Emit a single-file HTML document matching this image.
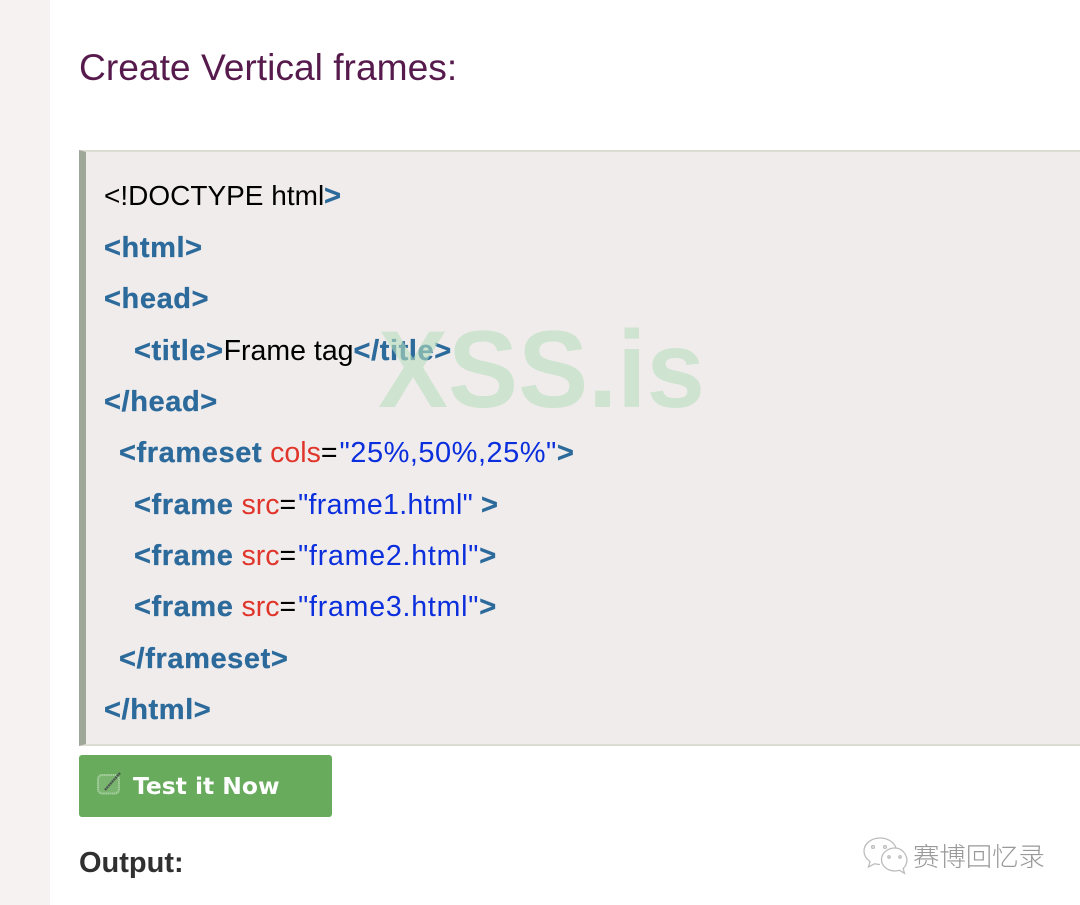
<!DOCTYPE html>
<html>
<head>
<meta charset="utf-8">
<style>
html,body{margin:0;padding:0;background:#fff}
body{width:1080px;height:905px;position:relative;overflow:hidden;font-family:"Liberation Sans",Arial,sans-serif}
.side{position:absolute;left:0;top:0;width:50px;height:905px;background:#f6f2f1}
h2{position:absolute;left:79px;top:45px;margin:0;font-weight:400;font-size:37.2px;line-height:44px;color:#561a4c;white-space:nowrap}
.code{position:absolute;left:79px;top:150px;width:1001px;height:596px;box-sizing:border-box;background:#f1ecec;border-left:7px solid #9fa898;border-top:2px solid #dcdcd2;border-bottom:2px solid #dcdcd2}
.l{position:absolute;white-space:pre;font-size:28.5px;line-height:32px;color:#000}
.t{color:#2b6a9b;font-weight:700;font-size:29px;letter-spacing:.6px;-webkit-text-stroke:.3px #2b6a9b}
.a{color:#e0352b}
.v{color:#0b2fdc}
.v0{letter-spacing:.33px}
.v1{font-size:29px;letter-spacing:.5px}
.v2{letter-spacing:.8px}
.e{letter-spacing:2px}
.wm{position:absolute;left:378px;top:312px;font-size:105px;line-height:120px;font-weight:700;color:#b7dfbe;letter-spacing:0;white-space:nowrap;opacity:.6;transform:scaleY(1.04);transform-origin:0 96.4px}
.btn{position:absolute;left:79px;top:755px;width:253px;height:62px;background:#68ab5c;border-radius:3px}
.btn span{position:absolute;left:54px;top:16px;font-family:"DejaVu Sans",Verdana,sans-serif;font-weight:700;font-size:23.4px;line-height:30px;color:#fff;white-space:nowrap}
.btn svg{position:absolute;left:16px;top:17px}
.out{position:absolute;left:79px;top:847px;font-size:29px;line-height:32px;font-weight:700;color:#303030}
.wx{position:absolute;left:862px;top:836px}
.wt{position:absolute;left:913px;top:839px;font-family:"Liberation Sans","Noto Sans CJK SC",sans-serif;font-weight:300;font-size:26.4px;line-height:36px;color:#999;white-space:nowrap}
</style>
</head>
<body>
<div class="side"></div>
<h2>Create Vertical frames:</h2>
<div class="code"></div>
<div class="l" style="left:104px;top:180px;font-size:28px">&lt;!DOCTYPE html<span class="t">&gt;</span></div>
<div class="l t" style="left:104px;top:232px">&lt;html&gt;</div>
<div class="l t" style="left:104px;top:283px">&lt;head&gt;</div>
<div class="l" style="left:134px;top:335px"><span class="t">&lt;title&gt;</span>Frame tag<span class="t">&lt;/title&gt;</span></div>
<div class="l t" style="left:104px;top:386px">&lt;/head&gt;</div>
<div class="l" style="left:119px;top:437px"><span class="t">&lt;frameset</span> <span class="a">cols</span><span class="e">=</span><span class="v v1">"25%,50%,25%"</span><span class="t">&gt;</span></div>
<div class="l" style="left:134px;top:489px"><span class="t">&lt;frame</span> <span class="a">src</span><span class="e">=</span><span class="v v0">"frame1.html"</span> <span class="t">&gt;</span></div>
<div class="l" style="left:134px;top:540px"><span class="t">&lt;frame</span> <span class="a">src</span><span class="e">=</span><span class="v v2">"frame2.html"</span><span class="t">&gt;</span></div>
<div class="l" style="left:134px;top:591px"><span class="t">&lt;frame</span> <span class="a">src</span><span class="e">=</span><span class="v v2">"frame3.html"</span><span class="t">&gt;</span></div>
<div class="l t" style="left:119px;top:643px">&lt;/frameset&gt;</div>
<div class="l t" style="left:104px;top:694px">&lt;/html&gt;</div>
<div class="wm">XSS.is</div>
<div class="btn">
<svg width="28" height="28" viewBox="0 0 28 28"><rect x="3" y="3" width="21" height="18.500" rx="4" fill="#7ab570" stroke="#a3cd9c" stroke-width="2" stroke-dasharray="1.6 .5"/><path d="M10 18L25 1" stroke="#4c5550" stroke-width="2.4" stroke-dasharray="2 .6"/></svg>
<span>Test it Now</span>
</div>
<div class="out">Output:</div>
<svg class="wx" width="48" height="40" viewBox="0 0 48 40" fill="none" stroke="#bcbcbc" stroke-width="1.3"><path d="M18 2C9.500 2 2 7.500 2 15c0 4.500 2.500 8 6 10.500L6.500 31l6-3.200c1.800.5 3.500.7 5.500.7"/><path d="M18 2c7.500 0 14 4 16 10"/><path d="M33 12c-7.500 0-13.500 5-13.500 11.500S25.500 35 33 35c1.700 0 3-.2 4.500-.7l5 3-1.400-4.800c2.600-2.300 3.900-5.500 3.900-9C44 17 39.300 12 33 12z"/><circle cx="11" cy="11" r="1.400"/><circle cx="23" cy="11" r="1.400"/><circle cx="27" cy="21" r="1.200"/><circle cx="38" cy="21" r="1.200"/></svg>
<div class="wt">赛博回忆录</div>
</body>
</html>
